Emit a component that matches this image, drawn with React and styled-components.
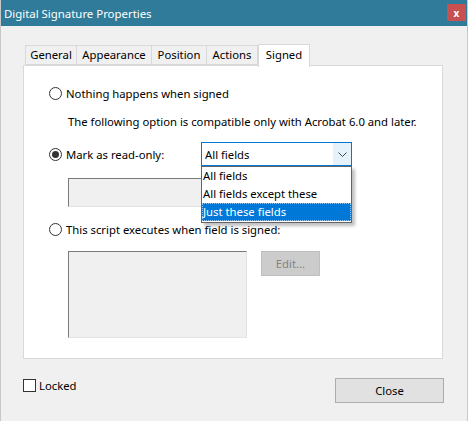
import React from "react"
import styled, { createGlobalStyle } from "styled-components"

const GlobalStyle = createGlobalStyle`
  html, body { margin: 0; padding: 0; background: #f0f0f0; }
  body { font-family: "Noto Sans", "Segoe UI", sans-serif; font-size: 11.3px; color: #000; }
`

const Window = styled.div`
  width: 468px;
  height: 421px;
  box-sizing: border-box;
  background: #f0f0f0;
  border-left: 1px solid #c8c8c8;
  border-right: 1px solid #c8c8c8;
  display: flex;
  flex-direction: column;
`

const TitleBar = styled.div`
  height: 26px;
  background: #2f7b99;
  display: flex;
  align-items: center;
  justify-content: space-between;
  padding: 0 1px 0 3px;
  color: #fff;
  font-size: 11.4px;
`

const CloseX = styled.div`
  width: 19px;
  height: 17px;
  background: #c75050;
  color: #fff;
  font-weight: bold;
  font-size: 10px;
  display: flex;
  align-items: center;
  justify-content: center;
  margin-top: -1px;
`

const Tabs = styled.div`
  display: flex;
  margin: 18px 0 0 24px;
  height: 21px;
  align-items: flex-end;
`

const Tab = styled.div`
  width: ${p => p.w}px;
  height: ${p => (p.active ? "23px" : "20px")};
  box-sizing: border-box;
  border: 1px solid #d9d9d9;
  border-bottom: ${p => (p.active ? "none" : "1px solid #d9d9d9")};
  border-left: ${p => (p.first || p.active ? "1px solid #d9d9d9" : "none")};
  background: ${p => (p.active ? "#fff" : "#f0f0f0")};
  display: flex;
  align-items: center;
  justify-content: center;
  position: relative;
  z-index: ${p => (p.active ? 2 : 1)};
  margin-bottom: ${p => (p.active ? "-2px" : "0")};
  line-height: 1;
  padding-bottom: ${p => (p.active ? "3px" : "0")};
`

const Panel = styled.div`
  margin-left: 22px;
  width: 420px;
  height: 294px;
  box-sizing: border-box;
  background: #fff;
  border: 1px solid #d9d9d9;
  padding: 19px 0 0 25px;
  display: flex;
  flex-direction: column;
  position: relative;
`

const RadioRow = styled.div`
  display: flex;
  align-items: center;
  height: ${p => p.h || 16}px;
  margin-top: ${p => p.mt || 0}px;
`

const RadioLabel = styled.div`
  display: flex;
  align-items: center;
  gap: 4px;
  width: ${p => (p.w ? p.w + "px" : "auto")};
`

const RadioCircle = styled.span`
  width: 13px;
  height: 13px;
  box-sizing: border-box;
  border: 1px solid #333;
  border-radius: 50%;
  background: #fff;
  display: flex;
  align-items: center;
  justify-content: center;
  flex-shrink: 0;
  &::after {
    content: "";
    width: 7px;
    height: 7px;
    border-radius: 50%;
    background: #333;
    display: ${p => (p.checked ? "block" : "none")};
  }
`

const Note = styled.div`
  margin: 13px 0 0 19px;
  height: 16px;
  line-height: 16px;
`

const SelectWrap = styled.div`
  position: relative;
  width: 151px;
  height: 24px;
`

const SelectBox = styled.div`
  width: 100%;
  height: 100%;
  box-sizing: border-box;
  border: 1px solid #0078d7;
  display: flex;
  align-items: stretch;
`

const SelectText = styled.div`
  flex: 1;
  background: #fff;
  padding-left: 3px;
  display: flex;
  align-items: center;
`

const SelectArrow = styled.div`
  width: 18px;
  background: #e5f1fb;
  display: flex;
  align-items: center;
  justify-content: center;
`

const ListPopup = styled.div`
  position: absolute;
  top: 24px;
  left: 0;
  width: 151px;
  box-sizing: border-box;
  border: 1px solid #646464;
  background: #fff;
  box-shadow: 3px 3px 3px rgba(0, 0, 0, 0.25);
  z-index: 5;
  padding: 0 0 1px 0;
`

const ListItem = styled.div`
  height: 18px;
  line-height: 18px;
  padding-left: 1px;
  background: ${p => (p.selected ? "#0078d7" : "#fff")};
  color: ${p => (p.selected ? "#fff" : "#000")};
  outline: ${p => (p.selected ? "1px dotted #9ac7f0" : "none")};
  outline-offset: -1px;
`

const FieldBox = styled.div`
  margin: 12px 0 0 19px;
  width: 220px;
  height: 29px;
  box-sizing: border-box;
  background: #f0f0f0;
  border: 1px solid #e3e3e3;
  border-top-color: #7a7a7a;
  border-left-color: #7a7a7a;
`

const ScriptRow = styled.div`
  display: flex;
  align-items: flex-start;
  gap: 14px;
  margin: 14px 0 0 19px;
`

const ScriptBox = styled.div`
  width: 179px;
  height: 87px;
  box-sizing: border-box;
  background: #f0f0f0;
  border: 1px solid #e3e3e3;
  border-top-color: #7a7a7a;
  border-left-color: #7a7a7a;
`

const Button = styled.div`
  width: ${p => p.w}px;
  height: 25px;
  box-sizing: border-box;
  background: ${p => (p.disabled ? "#cccccc" : "#e1e1e1")};
  border: 1px solid ${p => (p.disabled ? "#bfbfbf" : "#adadad")};
  color: ${p => (p.disabled ? "#838383" : "#000")};
  display: flex;
  align-items: center;
  justify-content: center;
`

const Footer = styled.div`
  display: flex;
  align-items: flex-start;
  justify-content: space-between;
  padding: 19px 23px 0 22px;
`

const CheckRow = styled.div`
  display: flex;
  align-items: center;
  gap: 3px;
`

const CheckSquare = styled.span`
  width: 13px;
  height: 13px;
  box-sizing: border-box;
  border: 1px solid #333;
  background: #fff;
`

function Radio({ checked, children, w }) {
  return (
    <RadioLabel w={w}>
      <RadioCircle checked={checked} />
      <span>{children}</span>
    </RadioLabel>
  )
}

export default function App() {
  const tabs = [
    { t: "General", w: 52 },
    { t: "Appearance", w: 75 },
    { t: "Position", w: 55 },
    { t: "Actions", w: 51 },
    { t: "Signed", w: 52, active: true },
  ]
  return (
    <>
      <GlobalStyle />
      <Window>
        <TitleBar>
          <span>Digital Signature Properties</span>
          <CloseX>x</CloseX>
        </TitleBar>
        <Tabs>
          {tabs.map((tab, i) => (
            <Tab key={tab.t} w={tab.w} active={tab.active} first={i === 0}>
              {tab.t}
            </Tab>
          ))}
        </Tabs>
        <Panel>
          <RadioRow>
            <Radio>Nothing happens when signed</Radio>
          </RadioRow>
          <Note>The following option is compatible only with Acrobat 6.0 and later.</Note>
          <RadioRow h={24} mt={12}>
            <Radio checked w={152}>Mark as read-only:</Radio>
            <SelectWrap>
              <SelectBox>
                <SelectText>All fields</SelectText>
                <SelectArrow>
                  <svg width="9" height="5" viewBox="0 0 9 5">
                    <path d="M0.5 0.5 L4.5 4.5 L8.5 0.5" fill="none" stroke="#444" strokeWidth="1" />
                  </svg>
                </SelectArrow>
              </SelectBox>
              <ListPopup>
                <ListItem>All fields</ListItem>
                <ListItem>All fields except these</ListItem>
                <ListItem selected>Just these fields</ListItem>
              </ListPopup>
            </SelectWrap>
          </RadioRow>
          <FieldBox />
          <RadioRow mt={14}>
            <Radio>This script executes when field is signed:</Radio>
          </RadioRow>
          <ScriptRow>
            <ScriptBox />
            <Button w={59} disabled>Edit...</Button>
          </ScriptRow>
        </Panel>
        <Footer>
          <CheckRow>
            <CheckSquare />
            <span>Locked</span>
          </CheckRow>
          <Button w={109}>Close</Button>
        </Footer>
      </Window>
    </>
  )
}
